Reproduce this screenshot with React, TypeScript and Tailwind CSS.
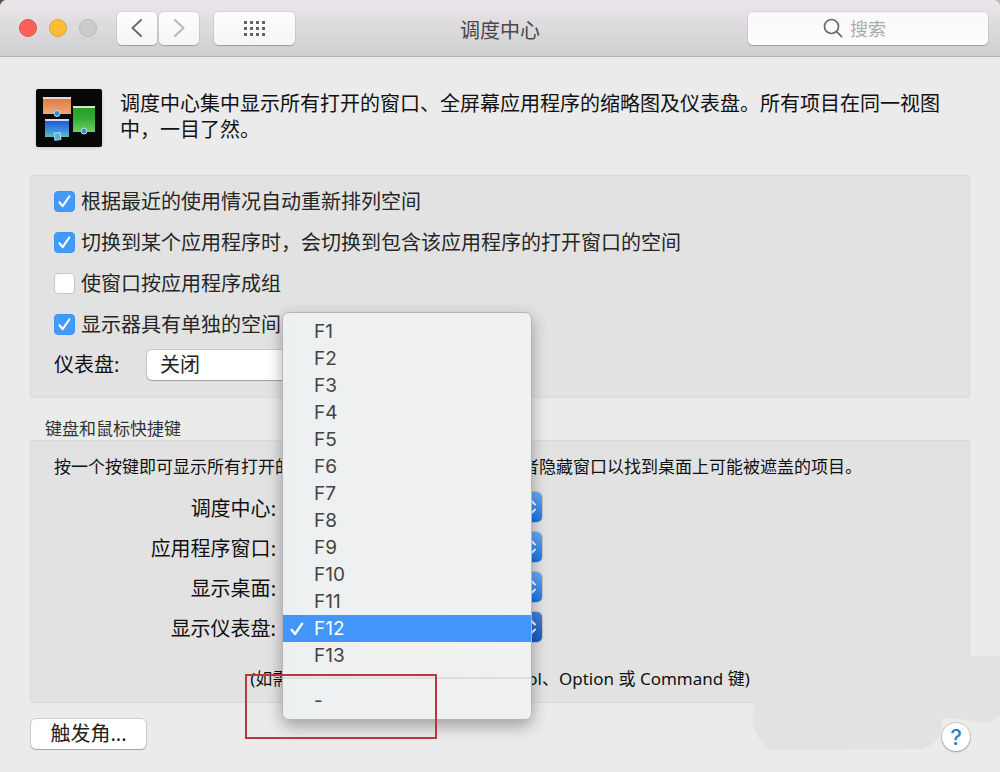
import { useState } from 'react'
import type { ReactNode } from 'react'

const KEYS = ['F1', 'F2', 'F3', 'F4', 'F5', 'F6', 'F7', 'F8', 'F9', 'F10', 'F11', 'F12', 'F13']

const OPTIONS = [
  { id: 'rearrange', label: '根据最近的使用情况自动重新排列空间', on: true },
  { id: 'switch', label: '切换到某个应用程序时，会切换到包含该应用程序的打开窗口的空间', on: true },
  { id: 'group', label: '使窗口按应用程序成组', on: false },
  { id: 'displays', label: '显示器具有单独的空间', on: true },
]

const SHORTCUTS = [
  { id: 'mission', label: '调度中心', value: 'F9' },
  { id: 'windows', label: '应用程序窗口', value: 'F10' },
  { id: 'desktop', label: '显示桌面', value: 'F11' },
]

function CheckMark({ className }: { className: string }) {
  return (
    <svg viewBox="0 0 14 14" className={className} fill="none" stroke="currentColor" strokeWidth="2.3" strokeLinecap="round" strokeLinejoin="round" aria-hidden="true">
      <path d="M1.6 7.8 L5 12 L12.2 1.6" />
    </svg>
  )
}

function MissionControlIcon() {
  return (
    <svg viewBox="0 0 66 58" className="h-[58px] w-[66px] shrink-0 drop-shadow" aria-hidden="true">
      <defs>
        <linearGradient id="mc-orange" x1="0" y1="0" x2="0" y2="1">
          <stop offset="0" stopColor="#e2743a" />
          <stop offset="1" stopColor="#f0a878" />
        </linearGradient>
        <linearGradient id="mc-blue" x1="0" y1="0" x2="0" y2="1">
          <stop offset="0" stopColor="#1f4fd0" />
          <stop offset="0.6" stopColor="#3a8be0" />
          <stop offset="1" stopColor="#5cc0b8" />
        </linearGradient>
        <linearGradient id="mc-green" x1="0" y1="0" x2="0" y2="1">
          <stop offset="0" stopColor="#2a9a2c" />
          <stop offset="0.5" stopColor="#36ac38" />
          <stop offset="1" stopColor="#6cd060" />
        </linearGradient>
      </defs>
      <rect width="66" height="58" rx="2" fill="#060707" />
      <rect x="7" y="8" width="28" height="17" fill="url(#mc-orange)" />
      <rect x="7" y="8" width="28" height="2" fill="#efd9cf" />
      <rect x="9" y="30" width="24" height="18" fill="url(#mc-blue)" />
      <rect x="9" y="30" width="24" height="2" fill="#d3dcf2" />
      <rect x="37" y="17" width="22" height="26" fill="url(#mc-green)" />
      <rect x="37" y="17" width="22" height="2" fill="#cfe8cd" />
      <circle cx="21" cy="24.500" r="3" fill="#3b8fd0" stroke="#b9def5" strokeWidth="1" />
      <circle cx="48" cy="42" r="3" fill="#3b8fd0" stroke="#b9def5" strokeWidth="1" />
      <rect x="18.500" y="44" width="6" height="7" fill="#58b0dc" stroke="#a5e0f5" strokeWidth="1" transform="rotate(-6 21 47)" />
    </svg>
  )
}

function ToolbarButton({ label, className, children }: { label: string; className: string; children: ReactNode }) {
  return (
    <button
      type="button"
      aria-label={label}
      className={`flex h-[33px] items-center justify-center rounded-[5px] bg-linear-to-b from-[#fdfdfd] to-[#f5f5f5] shadow-[0_0_0_1px_rgba(0,0,0,0.06),0_1px_1px_rgba(0,0,0,0.2)] ${className}`}
    >
      {children}
    </button>
  )
}

function Toolbar() {
  return (
    <header className="flex h-[57px] items-center border-b border-[#b4b2b4] bg-linear-to-b from-[#ebe6eb] to-[#cfcfcf] px-3">
      <div className="flex flex-1 items-center">
        <div className="ml-[7px] flex gap-3">
          <button type="button" aria-label="关闭窗口" className="size-[18px] rounded-full border border-[#e0514b] bg-[#fb5f58]" />
          <button type="button" aria-label="最小化" className="size-[18px] rounded-full border border-[#e0a431] bg-[#fcbd35]" />
          <button type="button" aria-label="缩放" className="size-[18px] rounded-full border border-[#b9b7b9] bg-[#cdcbcd]" />
        </div>
        <div className="ml-5 flex gap-0.5">
          <ToolbarButton label="后退" className="w-10">
            <svg viewBox="0 0 12 18" className="h-[18px] w-3" fill="none" stroke="#6c6c6c" strokeWidth="2" strokeLinecap="round" strokeLinejoin="round">
              <path d="M10 1 L1.5 9 L10 17" />
            </svg>
          </ToolbarButton>
          <ToolbarButton label="前进" className="w-10">
            <svg viewBox="0 0 12 18" className="h-[18px] w-3" fill="none" stroke="#b9b9b9" strokeWidth="2" strokeLinecap="round" strokeLinejoin="round">
              <path d="M2 1 L10.500 9 L2 17" />
            </svg>
          </ToolbarButton>
        </div>
        <ToolbarButton label="显示全部" className="ml-[15px] w-[81px]">
          <svg viewBox="0 0 22 15" className="h-[15px] w-[22px]" fill="#636363">
            {[0, 6, 12].map((y) => [0, 6, 12, 18].map((x) => <rect key={`${x}-${y}`} x={x} y={y} width="3" height="3" />))}
          </svg>
        </ToolbarButton>
      </div>
      <h1 className="pt-1.5 text-[20px] leading-[26px] text-[#4a484a]">调度中心</h1>
      <div className="flex flex-1 justify-end">
        <label className="flex h-[33px] w-[240px] items-center rounded-[5px] bg-linear-to-b from-[#f8f8f8] to-[#fdfdfd] pl-[75px] shadow-[0_0_0_1px_rgba(0,0,0,0.06),0_1px_1px_rgba(0,0,0,0.2)]">
          <svg viewBox="0 0 20 20" className="size-5 shrink-0" fill="none" stroke="#6c6c6c" strokeWidth="1.7" strokeLinecap="round" aria-hidden="true">
            <circle cx="8.500" cy="8.500" r="7" />
            <path d="M13.6 13.6 L18.600 18.600" />
          </svg>
          <input type="search" aria-label="搜索" placeholder="搜索" className="ml-[7px] w-full min-w-0 bg-transparent pt-0.5 text-[18px] leading-[26px] outline-none placeholder:text-[#ababab]" />
        </label>
      </div>
    </header>
  )
}

function CheckRow({ id, label, on }: { id: string; label: string; on: boolean }) {
  const [checked, setChecked] = useState(on)
  return (
    <div className="flex h-[21px] items-center gap-1.5">
      <span className="grid size-[21px] shrink-0 place-items-center">
        <input
          id={id}
          type="checkbox"
          checked={checked}
          onChange={(e) => setChecked(e.target.checked)}
          className="col-start-1 row-start-1 size-[21px] appearance-none rounded-[4px] border border-[#c6c6c6] bg-white checked:border-[#3c93f4] checked:bg-[#429bf9]"
        />
        {checked && <CheckMark className="pointer-events-none col-start-1 row-start-1 size-[13px] text-white" />}
      </span>
      <label htmlFor={id} className="text-[20px] leading-[26px] text-[#262626]">
        {label}
      </label>
    </div>
  )
}

function KeySelect({ id, value, pressed = false }: { id: string; value: string; pressed?: boolean }) {
  return (
    <div className="relative h-[30px] w-[255px]">
      <select id={id} defaultValue={value} className="h-full w-full appearance-none rounded-[5px] bg-white pl-3 text-[19px] shadow-[0_0_0_1px_rgba(0,0,0,0.12)]">
        {KEYS.map((k) => (
          <option key={k}>{k}</option>
        ))}
        <option>-</option>
      </select>
      <span
        className={`pointer-events-none absolute inset-y-0 right-0 flex w-[23px] items-center justify-center rounded-r-[5px] bg-linear-to-b ${
          pressed ? 'from-[#3f85da] to-[#1658c4]' : 'from-[#65aef8] to-[#1a6feb]'
        }`}
      >
        <svg viewBox="0 0 12 18" className="h-[18px] w-3" fill="none" stroke="white" strokeWidth="2" strokeLinecap="round" strokeLinejoin="round">
          <path d="M2 6.500 L6 2.500 L10 6.500 M2 11.500 L6 15.500 L10 11.500" />
        </svg>
      </span>
    </div>
  )
}

function KeyMenu({ selected, onSelect }: { selected: string; onSelect: (k: string) => void }) {
  const item = (k: string) => {
    const active = k === selected
    return (
      <button
        key={k}
        type="button"
        role="option"
        aria-selected={active}
        onClick={() => onSelect(k)}
        className={`flex h-[27px] w-full items-center pl-[7px] text-left ${active ? 'bg-[#4296fa] text-white' : 'text-[#444]'}`}
      >
        <span className="w-6">{active && <CheckMark className="size-[14px]" />}</span>
        {k}
      </button>
    )
  }
  return (
    <div
      role="listbox"
      aria-label="显示仪表盘"
      className="absolute -top-[300px] -left-[5px] z-10 w-[250px] rounded-[7px] border border-[#b5b5b5] bg-linear-to-r from-[#edf0f1] via-[#f0f0f0] to-[#eff1f2] py-[5px] font-['Inter','Noto_Sans_CJK_SC',sans-serif] text-[19px] leading-[27px] shadow-[0_6px_16px_rgba(0,0,0,0.32)]"
    >
      {KEYS.map(item)}
      <div className="flex h-[18px] items-center">
        <hr className="w-full border-t-2 border-[#dcdddd]" />
      </div>
      {item('-')}
    </div>
  )
}

export default function App() {
  const [dashboardKey, setDashboardKey] = useState('F12')

  return (
    <div lang="zh-CN" className="min-h-screen bg-linear-to-r from-[#6b5048] to-[#bdb8ba] font-['Noto_Sans','Noto_Sans_CJK_SC',sans-serif] text-[#111]">
      <div className="flex min-h-screen flex-col overflow-hidden rounded-t-[7px] bg-[#ebebeb]">
        <Toolbar />
        <main className="relative flex-1 px-[30px] pt-8 pb-5">
          <div className="flex gap-[18px] pl-1.5">
            <MissionControlIcon />
            <p className="pt-0.5 text-[20px] leading-[26px]">
              调度中心集中显示所有打开的窗口、全屏幕应用程序的缩略图及仪表盘。所有项目在同一视图中，一目了然。
            </p>
          </div>

          {/* Spaces */}
          <section className="mt-7 rounded-[3px] border border-[#dadada] bg-[#e2e2e2] px-[23px] pt-[15px] pb-[17px]">
            <div className="flex flex-col gap-5">
              {OPTIONS.map((o) => (
                <CheckRow key={o.id} id={o.id} label={o.label} on={o.on} />
              ))}
            </div>
            <div className="mt-[15px] flex items-center">
              <label htmlFor="dashboard" className="w-[93px] text-[20px] leading-[26px]">
                仪表盘:
              </label>
              <select
                id="dashboard"
                defaultValue="关闭"
                className="h-[30px] w-[250px] appearance-none rounded-[5px] bg-white pl-[13px] text-[20px] leading-[26px] text-[#222] shadow-[0_0_0_1px_rgba(0,0,0,0.12),0_1px_1px_rgba(0,0,0,0.2)]"
              >
                <option>关闭</option>
                <option>作为空间</option>
                <option>作为叠层</option>
              </select>
            </div>
          </section>

          {/* Shortcuts */}
          <h2 className="mt-5 pl-[15px] text-[17px] leading-[22px] text-[#333]">键盘和鼠标快捷键</h2>
          <section className="rounded-[3px] border border-[#dadada] bg-[#e2e2e2] px-[23px] pt-[13px] pb-[10px]">
            <p className="text-[17px] leading-[26px]">
              按一个按键即可显示所有打开的窗口、当前应用程序的窗口, 或者隐藏窗口以找到桌面上可能被遮盖的项目。
            </p>
            <div className="mt-3 flex flex-col gap-2.5">
              {SHORTCUTS.map((s) => (
                <div key={s.id} className="flex h-[30px] items-end gap-[11px]">
                  <label htmlFor={s.id} className="w-[222px] text-right text-[20px] leading-[26px]">
                    {s.label}:
                  </label>
                  <KeySelect id={s.id} value={s.value} />
                </div>
              ))}
              <div className="flex h-[30px] items-end gap-[11px]">
                <label htmlFor="show-dashboard" className="w-[222px] text-right text-[20px] leading-[26px]">
                  显示仪表盘:
                </label>
                <div className="relative">
                  <KeySelect id="show-dashboard" value={dashboardKey} pressed />
                  <KeyMenu selected={dashboardKey} onSelect={setDashboardKey} />
                  {/* Highlight frame around the last entry */}
                  <div className="pointer-events-none absolute top-[62px] -left-[42px] z-20 h-[65px] w-[192px] border-2 border-[#b8383f]" />
                </div>
              </div>
            </div>
            <p className="mt-6 text-center text-[17px] leading-[26px]">(如需其他选择，请按住 Shift、Control、Option 或 Command 键)</p>
          </section>

          <div className="relative mt-4 flex items-start justify-between pl-px">
            <svg viewBox="0 0 250 100" className="pointer-events-none absolute -top-[68px] -right-[30px] h-[100px] w-[250px]" fill="#e2e2e2" aria-hidden="true">
              <path d="M219 5 H250 V64 Q238 75 222 70 Q212 67 192 67 L191 80 Q187 95 170 98 L18 99 Q0 80 3 60 Q10 38 30 30 L219 30 Z" />
            </svg>
            <button type="button" className="h-[30px] w-[115px] rounded-[5px] bg-white text-[20px] leading-[26px] text-[#222] shadow-[0_0_0_1px_rgba(0,0,0,0.12),0_1px_1px_rgba(0,0,0,0.2)]">
              触发角...
            </button>
            <button
              type="button"
              aria-label="帮助"
              className="relative mt-1 size-7 rounded-full bg-white font-['Inter',sans-serif] text-[22px] leading-7 font-medium text-[#3380c0] shadow-[0_0_0_1px_rgba(0,0,0,0.12),0_1px_2px_rgba(0,0,0,0.25)]"
            >
              ?
            </button>
          </div>
        </main>
      </div>
    </div>
  )
}
